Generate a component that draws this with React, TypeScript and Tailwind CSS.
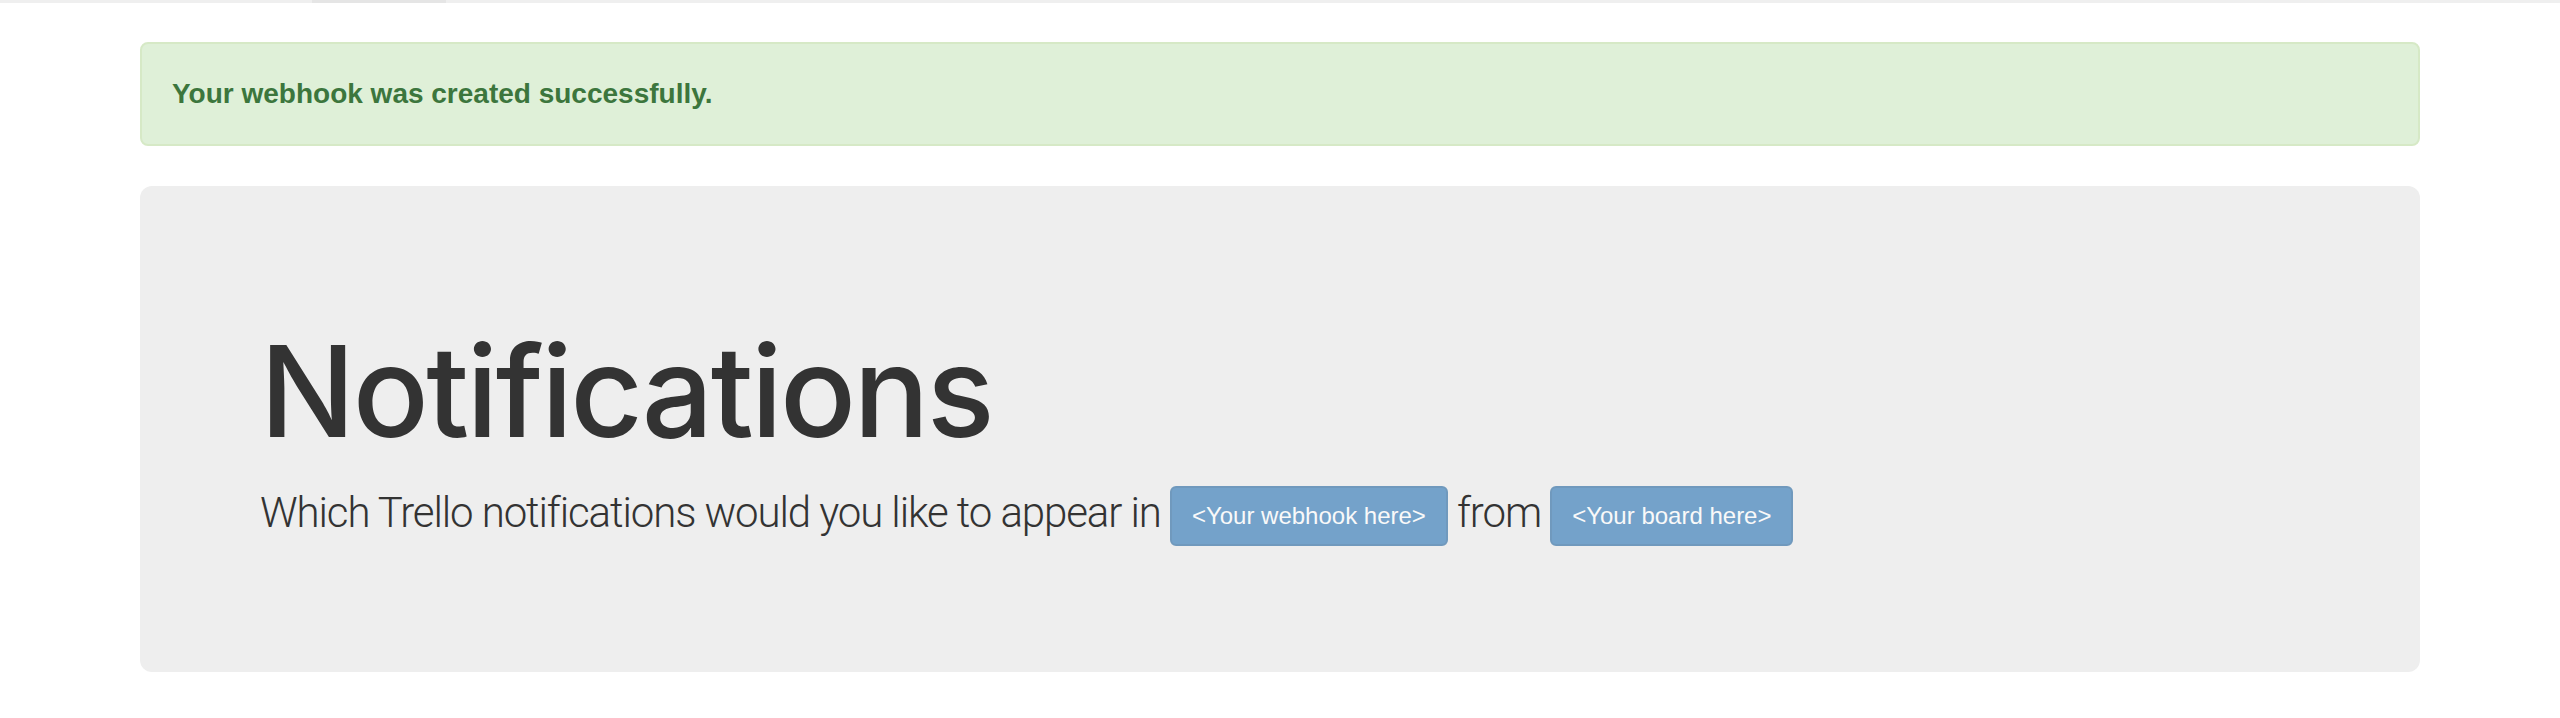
export default function App() {
  return (
    <div className="min-h-screen w-full bg-white text-[#333333] font-['Liberation_Sans',Arial,sans-serif]">
      {/* navbar bottom edge */}
      <div className="flex h-[3px] w-full bg-[#efefef]">
        <div className="ml-[312px] h-full w-[134px] bg-[#e5e5e5]" />
      </div>

      <div className="mx-auto mt-[39px] w-[2340px] px-[30px]">
        <div className="mb-[40px] rounded-[8px] border-2 border-[#d6e9c6] bg-[#dff0d8] p-[30px] text-[28px] font-bold leading-[40px] text-[#3c763d]">
          Your webhook was created successfully.
        </div>

        <div className="rounded-[12px] bg-[#eeeeee] px-[120px] py-[96px]">
          <h1 className="mt-[40px] mb-[22px] font-['Inter',sans-serif] text-[126px] font-medium leading-[1.1] tracking-[-2.6px]">
            Notifications
          </h1>
          <p className="mb-[30px] font-['Roboto',sans-serif] text-[42px] font-light leading-[1.42857] tracking-[-1.1px]">
            Which Trello notifications would you like to appear in{" "}
            <button
              disabled
              className="inline-block rounded-[6px] border-2 border-[#2e6da4] bg-[#337ab7] px-[20px] py-[10px] align-middle font-['Liberation_Sans',Arial,sans-serif] text-[24px] font-normal leading-[1.5] tracking-normal text-white opacity-65"
            >
              &lt;Your webhook here&gt;
            </button>{" "}
            from{" "}
            <button
              disabled
              className="inline-block rounded-[6px] border-2 border-[#2e6da4] bg-[#337ab7] px-[20px] py-[10px] align-middle font-['Liberation_Sans',Arial,sans-serif] text-[24px] font-normal leading-[1.5] tracking-normal text-white opacity-65"
            >
              &lt;Your board here&gt;
            </button>
          </p>
        </div>
      </div>
    </div>
  );
}
